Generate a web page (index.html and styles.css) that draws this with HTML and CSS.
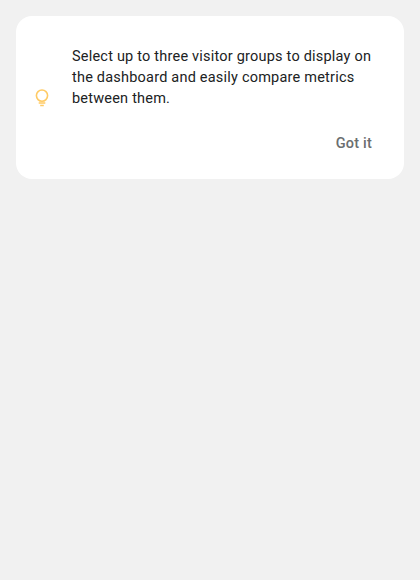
FILE: index.html
```html
<!DOCTYPE html>
<html lang="en">
<head>
<meta charset="utf-8">
<title>Tip</title>
<link rel="stylesheet" href="styles.css">
</head>
<body>
<section class="card">
  <svg class="icon" viewBox="0 0 20 20" aria-hidden="true">
    <circle cx="10" cy="7.6" r="5.6"/>
    <path d="M6.7 15h6.6M8.2 17.5h3.6"/>
  </svg>
  <div class="content">
    <p class="message">Select up to three visitor groups to display on<br>the dashboard and easily compare metrics<br>between them.</p>
    <button class="action" type="button">Got it</button>
  </div>
</section>
</body>
</html>
```
FILE: styles.css
```css
body {
  margin: 0;
  padding: 16px;
  background: #f1f1f1;
  font-family: Roboto, sans-serif;
}
.card {
  box-sizing: border-box;
  height: 163px;
  display: flex;
  align-items: center;
  gap: 20px;
  padding: 0 32px 0 16px;
  border-radius: 16px;
  background: #fff;
}
.icon {
  width: 20px;
  height: 20px;
  margin-top: 1px;
  flex: none;
  fill: none;
  stroke: #ffcb66;
  stroke-width: 1.6;
}
.content {
  flex: 1;
  display: flex;
  flex-direction: column;
  gap: 24px;
  padding-top: 4px;
}
.message {
  margin: 0;
  color: #202223;
  font-size: 14.5px;
  line-height: 21px;
  letter-spacing: 0.21px;
  white-space: nowrap;
}
.action {
  align-self: flex-end;
  padding: 0;
  border: 0;
  background: none;
  color: #6b6e6f;
  font: 500 14.5px/21px Roboto, sans-serif;
  letter-spacing: 0.2px;
}
```
